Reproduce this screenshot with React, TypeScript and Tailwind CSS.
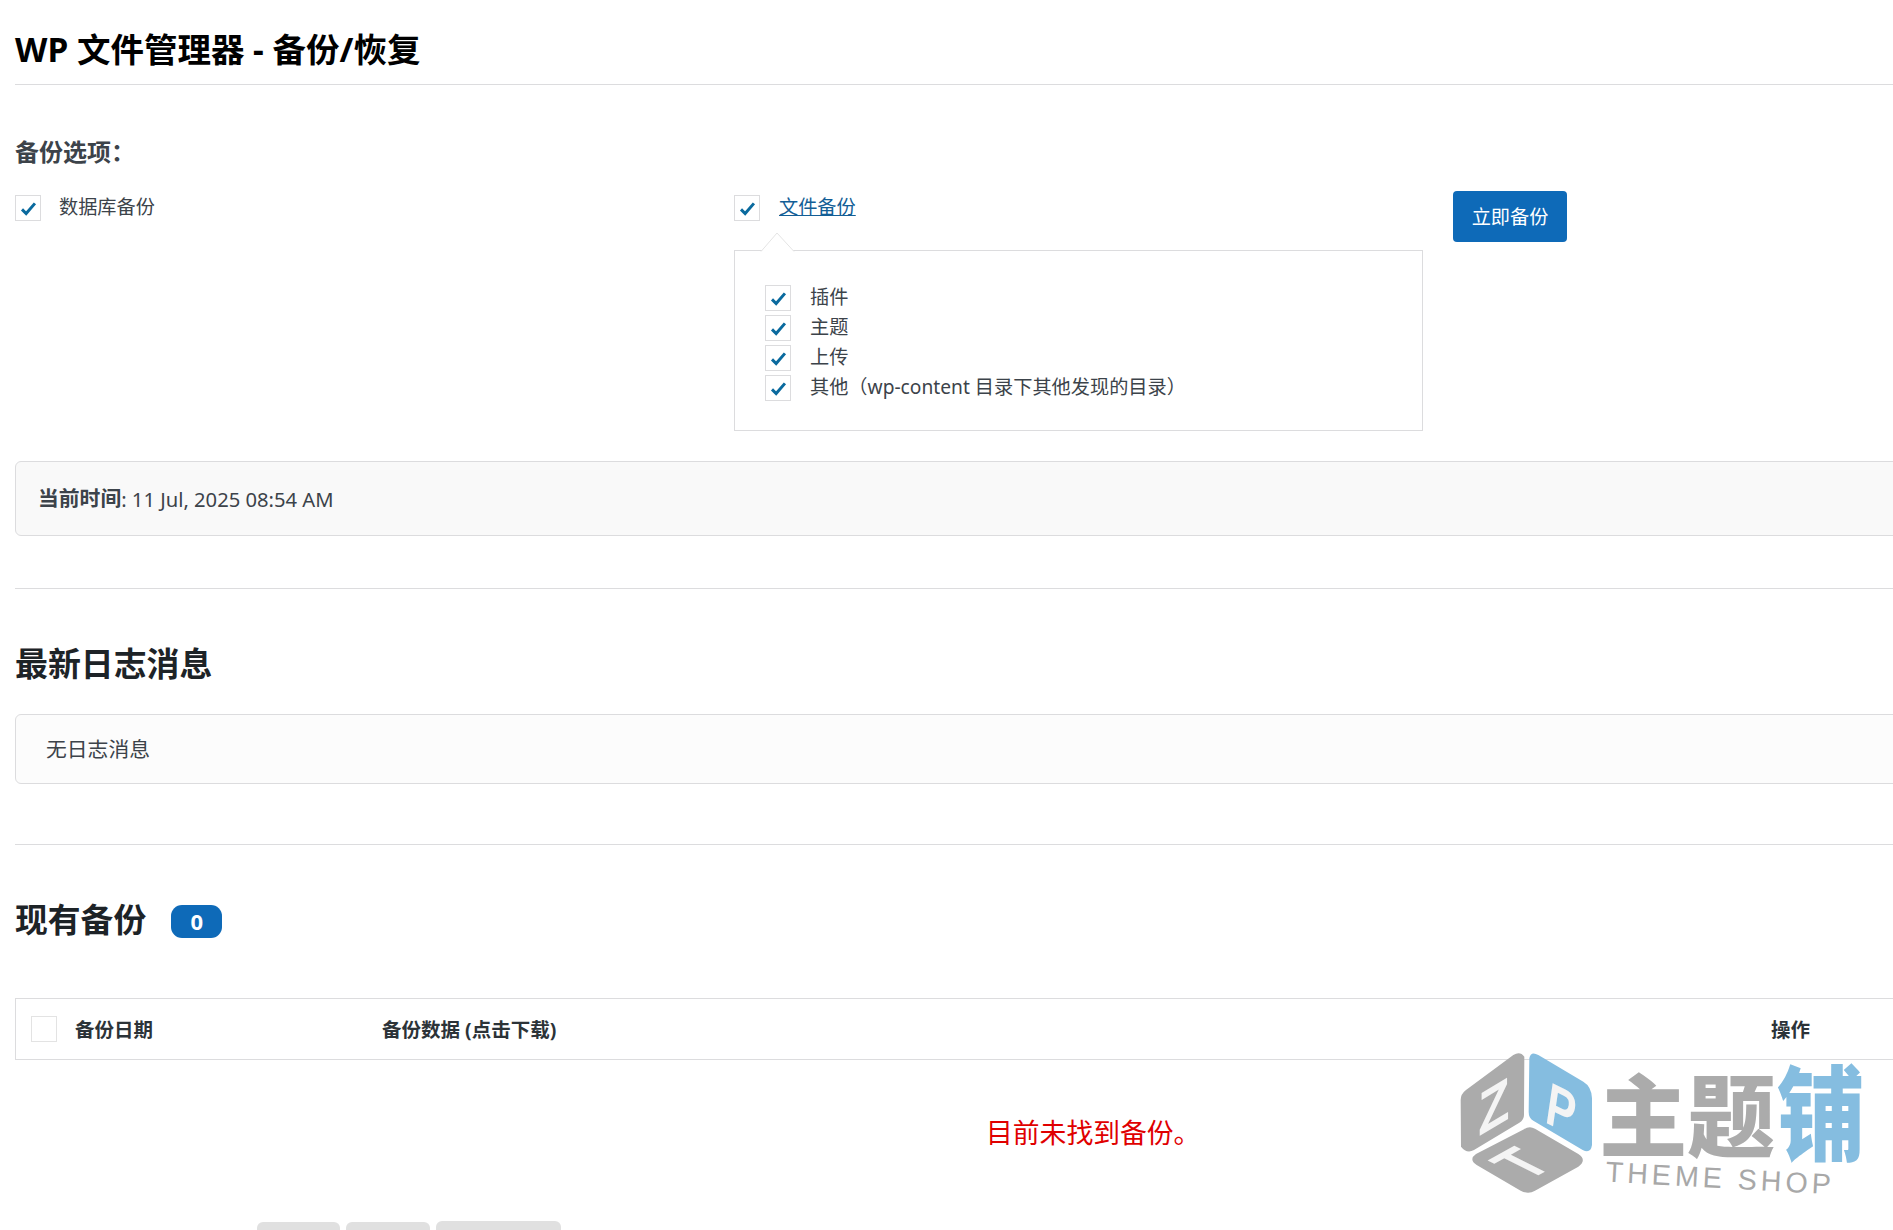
const FONT = "font-['Noto_Sans','Noto_Sans_CJK_SC',sans-serif]";

function Check({ checked = true, muted = false }: { checked?: boolean; muted?: boolean }) {
  return (
    <span className={`flex h-[26px] w-[26px] shrink-0 items-center justify-center border bg-white ${muted ? "border-[#e3e3e3]" : "border-[#dcdcde]"}`}>
      {checked && (
        <svg width="26" height="26" viewBox="0 0 26 26" fill="none">
          <path d="M6.5 14.5 L11 19 L20.5 8" stroke="#0a6a9e" strokeWidth="3.2" />
        </svg>
      )}
    </span>
  );
}

function SubOption({ label }: { label: string }) {
  return (
    <div className="flex h-[30px] items-start gap-[19px]">
      <Check />
      <span className="text-[19.2px] leading-[24px] text-[#3c434a]">{label}</span>
    </div>
  );
}

function Logo() {
  return (
    <svg className="pointer-events-none absolute left-[1400px] top-[1000px]" width="493" height="230" viewBox="0 0 1479 690">
      <path d="M340 165 Q360 152 373 170 L372 345 Q372 360 358 368 L222 450 Q200 462 183 440 L182 300 Q182 282 198 270 Z" fill="#ababab" />
      <path d="M388 175 Q392 152 415 165 L550 245 Q575 260 576 295 L576 435 Q572 462 548 450 L400 362 Q386 355 386 335 Z" fill="#85bde0" />
      <path d="M372 388 Q388 376 405 386 L535 462 Q562 480 535 500 L405 572 Q385 584 362 572 L230 495 Q205 478 228 462 Z" fill="#ababab" />
      <text transform="matrix(1.2 -0.72 0 1.42 235 410)" fontFamily="Liberation Sans, sans-serif" fontWeight="700" fontSize="128" fill="#f4f4f4">Z</text>
      <text transform="matrix(1 0.5 -0.2 1.36 432 365)" fontFamily="Liberation Sans, sans-serif" fontWeight="700" fontSize="128" fill="#f4f4f4">P</text>
      <text transform="matrix(1.15 -0.63 1.5 0.75 383.5 543)" fontFamily="Liberation Sans, sans-serif" fontWeight="700" fontSize="118" fill="#f4f4f4">T</text>
      <text transform="translate(598 450) scale(1 1.02)" fontFamily="Noto Sans CJK SC, sans-serif" fontWeight="900" fontSize="264" fill="#ababab">主题</text>
      <text transform="translate(1130 458) scale(1 1.18)" fontFamily="Noto Sans CJK SC, sans-serif" fontWeight="900" fontSize="264" fill="#85bde0">铺</text>
      <text transform="rotate(3.2 620 540)" x="616" y="545" fontFamily="Liberation Sans, sans-serif" fontSize="86" letterSpacing="12" fill="#a8a8a8">THEME SHOP</text>
    </svg>
  );
}

export default function App() {
  return (
    <div className={`relative h-[1230px] w-[1893px] overflow-hidden bg-white pl-[15px] ${FONT}`}>
      <h1 className="h-[85px] border-b border-[#dcdcde] pt-[29px] text-[33.5px] font-bold leading-[40px] text-black">
        WP 文件管理器 - 备份/恢复
      </h1>

      <h3 className="mt-[52px] h-[30px] text-[24px] font-bold leading-[30px] text-[#3c434a]">备份选项：</h3>

      <div className="mt-[24px] flex">
        <div className="flex w-[719px] items-start gap-[18px] pt-[4px]">
          <Check />
          <span className="text-[19.2px] leading-[24px] text-[#3c434a]">数据库备份</span>
        </div>

        <div className="w-[689px] pt-[4px]">
          <div className="flex items-start gap-[19px]">
            <Check />
            <a className="text-[19.2px] leading-[24px] text-[#135e96] underline">文件备份</a>
          </div>
          <div className="relative mt-[29px] h-[181px] border border-[#dcdcde] pl-[30px] pt-[34px]">
            <svg className="absolute left-[25px] top-[-19px]" width="36" height="20" viewBox="0 0 36 20" fill="white">
              <path d="M1 19.5 L17 1 L34 19.5" stroke="#e4e4e4" strokeWidth="1" />
            </svg>
            <SubOption label="插件" />
            <SubOption label="主题" />
            <SubOption label="上传" />
            <SubOption label="其他（wp-content 目录下其他发现的目录）" />
          </div>
        </div>

        <button className="ml-[30px] h-[51px] w-[114px] rounded-[4px] bg-[#0e6ab8] pt-[2px] text-[19.2px] text-white">立即备份</button>
      </div>

      <div className="mr-[-10px] mt-[30px] flex h-[75px] items-center rounded-[6px] border border-[#dcdcde] bg-[#f9f9f9] pl-[22px] pt-[1px] text-[20.8px] text-[#3c434a]">
        <strong className="font-bold">当前时间</strong>
        <span className="whitespace-pre text-[20.2px]">: 11 Jul, 2025 08:54 AM</span>
      </div>

      <div className="mt-[52px] h-px bg-[#dcdcde]" />

      <h2 className="mt-[53px] h-[44px] text-[32.9px] font-bold leading-[44px] text-[#1d2327]">最新日志消息</h2>

      <div className="mr-[-10px] mt-[28px] flex h-[70px] items-center rounded-[6px] border border-[#dcdcde] bg-[#fcfcfc] pl-[30px] pt-[1px] text-[20.8px] text-[#3c434a]">
        无日志消息
      </div>

      <div className="mt-[60px] h-px bg-[#dcdcde]" />

      <div className="mt-[53px] flex h-[44px] items-center gap-[25px]">
        <h2 className="text-[32.8px] font-bold leading-[44px] text-[#1d2327]">现有备份</h2>
        <span className="mt-[2px] flex h-[33px] w-[51px] items-center justify-center rounded-[11px] bg-[#0e6ab8] text-[22px] font-bold text-white">0</span>
      </div>

      <div className="mr-[-10px] mt-[56px] flex h-[62px] items-center border border-[#dcdcde] text-[19.5px] font-bold text-[#2c3338]">
        <div className="w-[59px] pl-[15px]">
          <Check checked={false} muted />
        </div>
        <div className="w-[307px] pt-[1px]">备份日期</div>
        <div className="w-[1389px] pt-[1px]">备份数据 (点击下载)</div>
        <div className="pt-[1px]">操作</div>
      </div>

      <p className="ml-[971px] mt-[53px] h-[40px] text-[26.8px] leading-[40px] text-[#e00000]">目前未找到备份。</p>

      <div className="ml-[242px] mt-[68px] flex items-end gap-[6px]">
        <div className="h-[20px] w-[83px] rounded-t-[6px] bg-[#e0e0e0]" />
        <div className="h-[20px] w-[84px] rounded-t-[6px] bg-[#e0e0e0]" />
        <div className="h-[21px] w-[125px] rounded-t-[6px] bg-[#e0e0e0]" />
      </div>

      <Logo />
    </div>
  );
}
